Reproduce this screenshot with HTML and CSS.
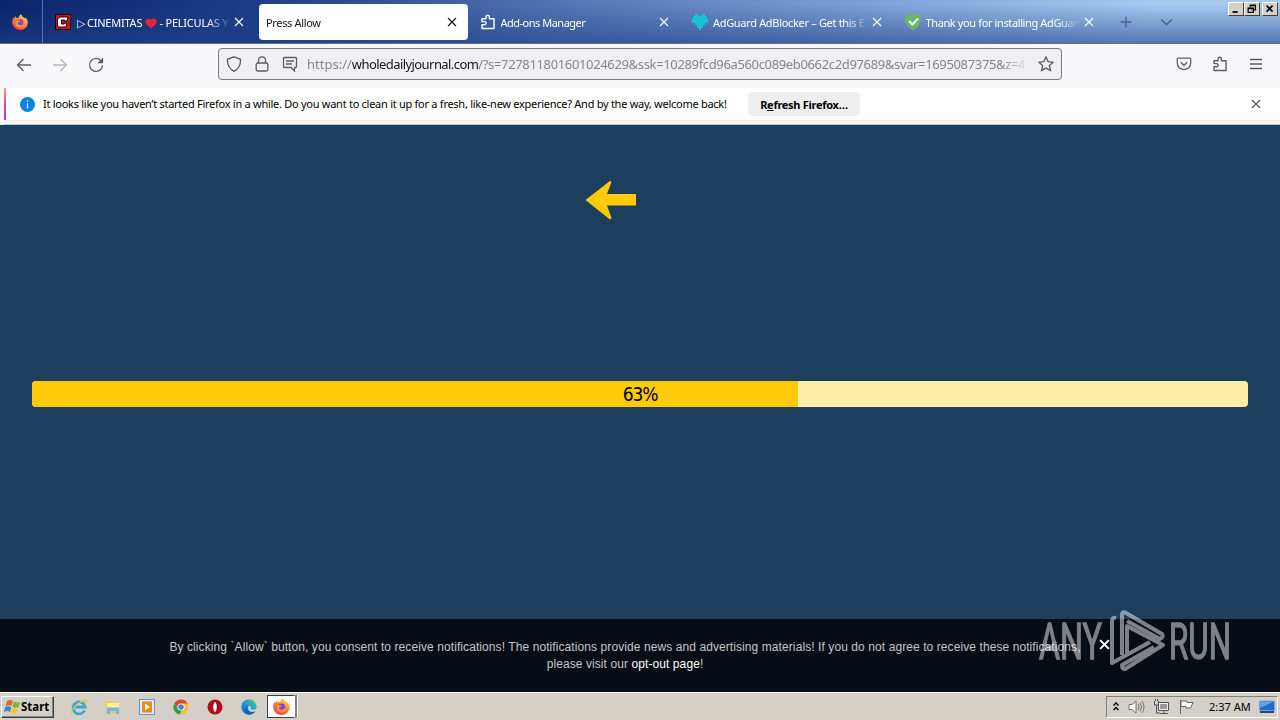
FILE: index.html
```html
<!DOCTYPE html>
<html lang="en">
<head>
    <meta charset="UTF-8">
    <meta name="viewport" content="width=device-width, initial-scale=1.0">
    <title>Press Allow</title>
    <link rel="stylesheet" href="styles.css">
</head>
<body>
    <!-- shared symbols -->
    <svg class="defs" width="0" height="0">
        <defs>
            <linearGradient id="fire" x1="0.8" y1="0" x2="0.2" y2="1">
                <stop offset="0" stop-color="#ffe04a"/>
                <stop offset="0.45" stop-color="#ff8a2b"/>
                <stop offset="1" stop-color="#f0325c"/>
            </linearGradient>
            <linearGradient id="edge" x1="0" y1="1" x2="1" y2="0">
                <stop offset="0" stop-color="#0b62c4"/>
                <stop offset="0.5" stop-color="#1b9ade"/>
                <stop offset="1" stop-color="#58d66c"/>
            </linearGradient>
            <symbol id="close" viewBox="0 0 10 10"><path d="M1 1l8 8M9 1L1 9" fill="none" stroke="currentColor" stroke-width="1.1"/></symbol>
            <symbol id="close-bold" viewBox="0 0 10 10"><path d="M1 1l8 8M9 1L1 9" fill="none" stroke="currentColor" stroke-width="1.8"/></symbol>
            <symbol id="firefox" viewBox="0 0 16 16">
                <path d="M8.8.3c1 .9 1.6 1.6 1.9 2.6 1.1.2 2.2 1 2.7 2 .1-.6 0-1-.1-1.4 1.6 1.4 2.5 3.2 2.5 5.2A7.7 7.3 0 0 1 8 16 7.7 7.5 0 0 1 .2 8.5c0-2 .6-3.7 1.5-4.9l.5 1 1.4-2.3.7 1.6c.8-.2 1.7-.2 2.3 0C6.8 2.4 7.7 1.3 8.8.3z" fill="url(#fire)"/>
                <circle cx="8" cy="8.7" r="3.5" fill="#8b3fdc"/>
                <path d="M4 7.3c1.3-1 2.7-.9 4.3-.3-.5 1-1.6 1.2-2.6 1.4 0 2 1.5 3.1 3.5 2.7 2-.5 2.9-2 2.2-4.2 1.7 2.6.8 6.5-3.2 6.8C4.3 13.9 2.7 10.3 4 7.3z" fill="#ff9a30"/>
            </symbol>
            <symbol id="puzzle" viewBox="0 0 16 16"><path d="M2 14.5V10.800h2.500a1.500 1.500 0 0 0 0-3.200H2V4.800h4V2.900a1.700 1.700 0 0 1 3.400 0v1.900h4.600v9.700z" fill="none" stroke="currentColor" stroke-width="1.4" stroke-linejoin="round"/></symbol>
        </defs>
    </svg>

    <div class="tabbar">
        <div class="view-tab"><svg width="16" height="16"><use href="#firefox"/></svg></div>
        <div class="tabs">
            <div class="tab">
                <svg class="favicon" viewBox="0 0 16 16"><rect width="16" height="16" fill="#180808"/><rect x="1" y="1" width="14" height="14" fill="#d01218"/><path d="M5 3h8l-1 4H9.5V6H6.5v4h2.8V9h2.5l-.6 4H4L2.5 12V5z" fill="#fff" stroke="#220505" stroke-width="1"/></svg>
                <span class="title t1">▷ CINEMITAS <svg class="heart" viewBox="0 0 12 11"><path d="M6 10.7L1 5.8C-1.2 3 2.5-1.6 6 1.8 9.5-1.6 13.2 3 11 5.8z" fill="#e8233b"/></svg> - PELICULAS Y</span>
                <svg class="x"><use href="#close"/></svg>
            </div>
            <div class="tab active">
                <span class="title t2">Press Allow</span>
                <svg class="x"><use href="#close"/></svg>
            </div>
            <div class="tab">
                <svg class="favicon"><use href="#puzzle"/></svg>
                <span class="title t3">Add-ons Manager</span>
                <svg class="x"><use href="#close"/></svg>
            </div>
            <div class="tab">
                <svg class="favicon" viewBox="0 0 16 16"><path d="M3 0h3v2h4V0h3v2h2v3h1v4h-3v2h-2v3H9v2H7v-2H5v-3H3V9H0V5h1V2h2z" fill="#12c4d6"/></svg>
                <span class="title t4">AdGuard AdBlocker – Get this E</span>
                <svg class="x"><use href="#close"/></svg>
            </div>
            <div class="tab">
                <svg class="favicon" viewBox="0 0 16 16"><path d="M8 0c3 .2 5.500.8 8 1.700 0 6-1.500 11-8 14.300C1.500 12.700 0 7.700 0 1.700 2.500.8 5 .2 8 0z" fill="#62ba62"/><path d="M4 7l3.500 3.500L13 4.500" fill="none" stroke="#fff" stroke-width="2"/></svg>
                <span class="title t5">Thank you for installing AdGuard</span>
                <svg class="x"><use href="#close"/></svg>
            </div>
        </div>
        <svg class="tab-tools" width="60" height="16" viewBox="0 0 60 16" fill="none" stroke="#4a5f87" stroke-width="1.3"><path d="M2.500 8h11M8 2.500v11M43 5.500l5.500 5 5.500-5"/></svg>
        <div class="window-buttons">
            <svg viewBox="0 0 16 14"><path d="M4 10.500h6" stroke="#000" stroke-width="2"/></svg>
            <svg viewBox="0 0 16 14"><path d="M6 5V2.500h6V8h-2M6 3h6M3.500 6h6v5h-6zM3 6.500h7" fill="none" stroke="#000" stroke-width="1.4"/></svg>
            <svg class="last" viewBox="0 0 16 14"><path d="M4 3l7 7M11 3l-7 7" stroke="#000" stroke-width="1.9"/></svg>
        </div>
    </div>

    <div class="toolbar">
        <svg class="nav" viewBox="0 0 16 16"><path d="M15 8H1.500M7.500 2l-6 6 6 6"/></svg>
        <svg class="nav disabled" viewBox="0 0 16 16"><path d="M1 8h13.500M8.500 2l6 6-6 6"/></svg>
        <svg class="nav" viewBox="0 0 16 16"><path d="M13.300 4A6.500 6.500 0 1 0 14.500 8.500M14.500 1v4.500H10"/><path d="M14.500 1.500v4h-4z" fill="#5b5b66" stroke="none"/></svg>
        <div class="urlbar">
            <svg viewBox="0 0 16 16"><path d="M8 .8l6.500 2.500C14.800 9 12.700 13 8 15.300 3.300 13 1.200 9 1.500 3.300z"/></svg>
            <svg viewBox="0 0 16 16"><rect x="2.200" y="7" width="11.600" height="8" rx="1.500"/><path d="M4.500 7V4.300a3.500 3.500 0 0 1 7 0V7"/></svg>
            <svg viewBox="0 0 16 16"><path d="M2.500 1.500h11q1 0 1 1v8q0 1-1 1h-1V15L9 11.500H2.500q-1 0-1-1v-8q0-1 1-1zM4 5h8M4 8h6"/></svg>
            <div class="url">https://<b>wholedailyjournal.com</b><span>/?s=727811801601024629&amp;ssk=10289fcd96a560c089eb0662c2d97689&amp;svar=1695087375&amp;z=4</span></div>
            <svg class="star" viewBox="0 0 16 16"><path d="M8 1l2.100 4.600 5 .6-3.700 3.400 1 5L8 12.100l-4.400 2.500 1-5L.9 6.200l5-.6z"/></svg>
        </div>
        <div class="tools">
            <svg viewBox="0 0 16 16"><path d="M2.500 2.200h11q1.200 0 1.200 1.200V7a6.700 6.700 0 0 1-13.400 0V3.400q0-1.200 1.200-1.200zM4.700 6.300L8 9.300l3.300-3"/></svg>
            <svg><use href="#puzzle"/></svg>
            <svg viewBox="0 0 16 16"><path d="M2 3.500h12M2 8h12M2 12.500h12"/></svg>
        </div>
    </div>

    <div class="notice">
        <svg class="info" viewBox="0 0 15 15"><circle cx="7.500" cy="7.500" r="7.500" fill="#0a84e0"/><path d="M7.500 6.300V11.500M7.500 3.300v1.500" stroke="#d8f0ff" stroke-width="1.3"/></svg>
        <span class="notice-text">It looks like you haven’t started Firefox in a while. Do you want to clean it up for a fresh, like-new experience? And by the way, welcome back!</span>
        <button><span>R<u>e</u>fresh Firefox…</span></button>
        <svg class="x"><use href="#close"/></svg>
    </div>

    <main>
        <svg class="arrow" viewBox="0 0 51 40"><path d="M.5 20L25 1l1.500 1L22 14h29v11.500H22L26.500 38 25 39.500z" fill="#ffca08"/></svg>
        <div class="progress">
            <div class="fill" style="width: 63%"></div>
            <span>63%</span>
        </div>
        <footer>
            <p><span class="line1">By clicking `Allow` button, you consent to receive notifications! The notifications provide news and advertising materials! If you do not agree to receive these notifications,</span><br><span class="line2">please visit our <a>opt-out page</a>!</span></p>
            <svg class="x"><use href="#close-bold"/></svg>
        </footer>
        <svg class="watermark" viewBox="0 0 196 64">
            <g fill="#fff" stroke="#fff" stroke-width="1.3" font-family="Roboto" font-size="50">
                <text x="3" y="50" textLength="63" lengthAdjust="spacingAndGlyphs">ANY</text>
                <text x="133" y="50" textLength="62" lengthAdjust="spacingAndGlyphs">RUN</text>
            </g>
            <path d="M80 9q-4-1-4 3v42l38-21M86 46V5q1-3 4-1l36 21q2 3-2 5L91 12M91 44V17l36 19-38 24q-3 0-3-4l32-18" fill="none" stroke="#fff" stroke-width="4" stroke-linejoin="round"/>
        </svg>
    </main>

    <div class="taskbar">
        <div class="start"><svg width="17" height="16" viewBox="0 0 17 16"><path d="M3 2q3-2 6 0L7.500 7Q5 5.500 1.500 7z" fill="#e8662c"/><path d="M10 2.500q3 2 6 0L14.500 8q-3 1.500-6 0z" fill="#72b83c"/><path d="M1.200 8q3-1.500 6 0L6 13q-3-2-6 0z" fill="#3987d7"/><path d="M8 9q3 1.500 6 0l-1.500 5q-3 2-6-.5z" fill="#f8c928"/></svg><span>Start</span></div>
        <div class="launch">
            <svg viewBox="0 0 16 16"><path d="M13.500 11.500A6 6 0 1 1 14 8H4" fill="none" stroke="#35a8e0" stroke-width="2.8"/><path d="M1 14.500C-1 11 9 1 15 1.500c1 1 0 2.500-1 4" fill="none" stroke="#e9bd45" stroke-width="1.3"/></svg>
            <svg viewBox="0 0 16 16"><path d="M1 2h5l1 1h7v11H1z" fill="#e7c967"/><path d="M2 4h12v4H2z" fill="#fff0a8"/><path d="M2 15V9h12v6h-3v-3H5v3z" fill="#76b9df"/></svg>
            <svg viewBox="0 0 16 16"><rect x=".5" y=".5" width="15" height="15" fill="#d9edf9" stroke="#5e9bd0"/><rect x="3" y="2.500" width="10" height="11" fill="#f18a14"/><path d="M6 4.500l5 3.500-5 3.500z" fill="#fff"/></svg>
            <svg viewBox="0 0 16 16"><circle cx="8" cy="8" r="7.500" fill="#f4c430"/><path d="M1.500 4.200A7.500 7.500 0 0 1 14.700 4.600H8L5 9.500z" fill="#df4334"/><path d="M1.500 4.200L5 10l3.500 1.500-2 4A7.500 7.500 0 0 1 1.500 4.200z" fill="#2b9e4b"/><circle cx="8" cy="8" r="3.600" fill="#fff"/><circle cx="8" cy="8" r="2.800" fill="#4285e8"/></svg>
            <svg viewBox="0 0 16 16"><circle cx="8" cy="8" r="7.500" fill="#b80c12"/><ellipse cx="8" cy="8" rx="2.300" ry="5.500" fill="#fff" stroke="#7d070a"/></svg>
            <svg viewBox="0 0 16 16"><circle cx="8" cy="8" r="7.700" fill="url(#edge)"/><path d="M7 7c-2 3 1 6 5 5.500l2.500-.8C13 14.500 10 16 7.500 15.500 3 14 3 8 7 7z" fill="#1264b5"/><path d="M7.500 7.500c2-1 3 0 2 2 1.500 2 4 1.500 6.500 0V12l-4 1c-4 0-6-3-4.500-5.500z" fill="#d4d0c8"/></svg>
        </div>
        <div class="running"><svg width="17" height="17" viewBox="0 0 16 16"><use href="#firefox"/></svg></div>
        <div class="tray">
            <svg width="8" height="12" viewBox="0 0 8 12" fill="none" stroke="#000" stroke-width="1.4"><path d="M1.500 4.500L4 2l2.500 2.500M1.500 9L4 6.500 6.500 9"/></svg>
            <svg width="17" height="16" viewBox="0 0 17 16" fill="#fff" stroke="#73736f"><path d="M1 5.500h3L8 2v12L4 10.500H1z"/><path d="M10 5q2 3 0 6M12 3.500q3 4.500 0 9M14 2q4 6 0 12" fill="none"/></svg>
            <svg width="17" height="16" viewBox="0 0 17 16" fill="#eee" stroke="#555"><path d="M5.500 3.500h10v8h-10zM7 14.500h8M11 12v2"/><path d="M1.500 2v4h4V2M3.500 6v8H7M2.500 0v2M4.500 0v2" fill="none"/><path d="M7 5h7v5H7z" fill="#999" stroke="none"/></svg>
            <svg width="17" height="16" viewBox="0 0 17 16" fill="#fff" stroke="#666"><path d="M2.500 1v14M3 2h6v1.500h6L12.500 9H8V7.500H3z"/></svg>
            <span>2:37 AM</span>
            <svg width="16" height="14" viewBox="0 0 16 14"><path d="M.5 1h15v9.500H.5z" fill="#2769c8" stroke="#7aa3dc"/><path d="M1 1.500h14L1 8z" fill="#5da0ef"/><path d="M1 12h14" stroke="#28466e" stroke-width="2"/></svg>
        </div>
    </div>
</body>
</html>
```
FILE: styles.css
```css
* {
    box-sizing: border-box;
}

body {
    display: flex;
    flex-direction: column;
    width: 1280px;
    height: 720px;
    margin: 0;
    overflow: hidden;
    font-family: "Noto Sans", sans-serif;
    font-size: 11px;
    color: #000;
}

svg {
    flex: none;
}

.defs {
    position: absolute;
}

.x {
    width: 10px;
    height: 10px;
}

.tabbar {
    display: flex;
    height: 44px;
    background: linear-gradient(transparent 10%, rgba(30, 66, 138, 0.6)), linear-gradient(90deg, #0a246a, #1d3c85 20%, #5677b5 45%, #85a8dc 72%, #a6caf0 90%);
    border-bottom: 1px solid #656c7c;
    color: #fff;
}

.view-tab {
    display: flex;
    align-items: center;
    justify-content: center;
    width: 43px;
    padding-right: 2px;
    border-right: 1px solid #5870a8;
}

.tabs {
    display: flex;
    gap: 3.5px;
    padding: 4px 0 3px 3.5px;
}

.tab {
    display: flex;
    align-items: center;
    width: 209px;
    padding: 0 11.5px 0 7px;
    border-radius: 4px;
}

.tab.active {
    background: #fff;
    color: #15141a;
}

.favicon {
    width: 16px;
    height: 16px;
    margin: 0 5px 0 1px;
}

.title {
    flex: 1;
    min-width: 0;
    margin-right: 3px;
    padding-top: 1px;
    overflow: hidden;
    white-space: nowrap;
    line-height: 18px;
    -webkit-mask-image: linear-gradient(to left, transparent, #000 24px);
    mask-image: linear-gradient(to left, transparent, #000 24px);
}

.t1 {
    padding-left: 1px;
    letter-spacing: -0.22px;
}

.t2 {
    letter-spacing: -0.35px;
}

.t3 {
    letter-spacing: -0.5px;
}

.t4 {
    letter-spacing: -0.32px;
}

.t5 {
    letter-spacing: -0.38px;
}

.heart {
    width: 12px;
    height: 11px;
    vertical-align: -2px;
}

.tab-tools {
    margin: 14px 0 0 12px;
}

.window-buttons {
    display: flex;
    margin: 2px 2px 0 auto;
}

.window-buttons svg {
    width: 16px;
    height: 14px;
    background: #d4d0c8;
    border: 1px solid;
    border-color: #fff #404040 #404040 #fff;
}

.window-buttons .last {
    margin-left: 2px;
}

.toolbar {
    display: flex;
    align-items: center;
    height: 44px;
    padding: 0 16px;
    background: #f8f8fb;
}

.toolbar svg {
    width: 16px;
    height: 16px;
    fill: none;
    stroke: #5b5b66;
    stroke-width: 1.3;
    color: #5b5b66;
}

.nav {
    margin-right: 20px;
    position: relative;
    top: -1px;
}

.disabled {
    opacity: 0.4;
}

.urlbar {
    display: flex;
    align-items: center;
    gap: 12px;
    width: 844px;
    height: 32px;
    margin: -4px 0 0 94px;
    padding: 0 7px;
    background: #f0f0f4;
    border: 1px solid #77777d;
    border-radius: 4px;
}

.url {
    flex: 1;
    margin: 0 -3px 0 -3px;
    overflow: hidden;
    white-space: nowrap;
    font-size: 13px;
    line-height: 20px;
    color: #85858c;
    -webkit-mask-image: linear-gradient(to left, transparent, #000 30px);
    mask-image: linear-gradient(to left, transparent, #000 30px);
}

.url b {
    font-weight: normal;
    color: #15141a;
    letter-spacing: -0.57px;
}

.url span {
    letter-spacing: -0.35px;
}

.star {
    margin-left: -1px;
}

.tools {
    display: flex;
    gap: 20px;
    margin: -4px 0 0 auto;
}

.notice {
    display: flex;
    align-items: center;
    height: 37px;
    padding: 0 19px 5px 16px;
    background: linear-gradient(#fff 32px, #eeeef0 32px 33px, #fbf5f2 33px 36px, #a8c8e4 36px);
    border-left: 4px solid #f8f8fb;
    position: relative;
}

.notice::before {
    content: "";
    position: absolute;
    left: 0;
    top: 0;
    width: 2px;
    height: 32px;
    background: linear-gradient(#ff9a68, #d94b9b 55%, #a040e0);
}

.info {
    width: 15px;
    height: 15px;
    margin-right: 8px;
}

.notice-text {
    width: 705px;
    margin-top: -2px;
    letter-spacing: -0.27px;
    white-space: nowrap;
}

.notice button {
    width: 112px;
    height: 24px;
    padding: 0;
    background: #eeeeee;
    border: none;
    border-radius: 4px;
    font: bold 11px "Noto Sans", sans-serif;
    letter-spacing: -0.28px;
}

.notice .x {
    margin-left: auto;
    color: #55555c;
}

main {
    display: flex;
    flex-direction: column;
    flex: 1;
    position: relative;
    background: #1d3e5c;
}

.arrow {
    width: 51px;
    height: 40px;
    margin: 55px 0 0 585px;
}

.progress {
    position: relative;
    height: 26px;
    margin: 161px 32px 0;
    overflow: hidden;
    border-radius: 4px;
    background: #ffeeaa;
}

.fill {
    height: 100%;
    background: #ffca08;
}

.progress span {
    position: absolute;
    inset: 0;
    text-align: center;
    font-family: "DejaVu Sans Condensed", "Noto Sans", sans-serif;
    font-size: 19px;
    line-height: 26px;
    letter-spacing: -1.2px;
}

footer {
    position: relative;
    height: 73px;
    margin-top: auto;
    padding-top: 20px;
    background: #070d15;
    color: #c3c5c8;
    font-family: "Liberation Sans", sans-serif;
    font-size: 12px;
    line-height: 17px;
    text-align: center;
}

footer p {
    width: 912px;
    margin: 0 0 0 169px;
    letter-spacing: 0.085px;
    white-space: nowrap;
}

footer a {
    color: #fff;
}

footer .x {
    position: absolute;
    left: 1099px;
    top: 20px;
    width: 11px;
    height: 11px;
    color: #fff;
}

.watermark {
    position: absolute;
    left: 1036px;
    top: 484px;
    width: 196px;
    height: 64px;
    opacity: 0.48;
}

.taskbar {
    display: flex;
    align-items: center;
    height: 28px;
    padding: 0 2px 0 1px;
    background: #d4d0c8;
    border-top: 1px solid #fff;
}

.start {
    display: flex;
    align-items: center;
    width: 53px;
    height: 22px;
    padding-left: 2px;
    border: 1px solid;
    border-color: #fff #404040 #404040 #fff;
    box-shadow: inset -1px -1px #808080;
    font-size: 11.5px;
    font-weight: bold;
}

.launch {
    display: flex;
    gap: 18px;
    margin-left: 17px;
}

.launch svg {
    width: 16px;
    height: 16px;
}

.running {
    display: flex;
    align-items: center;
    justify-content: center;
    width: 28px;
    height: 23px;
    margin-left: 10px;
    background: #fff;
    border: 1px solid #404040;
    border-right-color: #fff;
    box-shadow: 2px 0 #808080, 3px 0 #fff;
}

.tray {
    display: flex;
    align-items: center;
    gap: 8px;
    width: 172px;
    height: 22px;
    margin-left: auto;
    padding-left: 5px;
    border: 1px solid;
    border-color: #808080 #fff #fff #808080;
}

.tray span {
    width: 42px;
    margin-left: 6px;
    white-space: nowrap;
}
```
